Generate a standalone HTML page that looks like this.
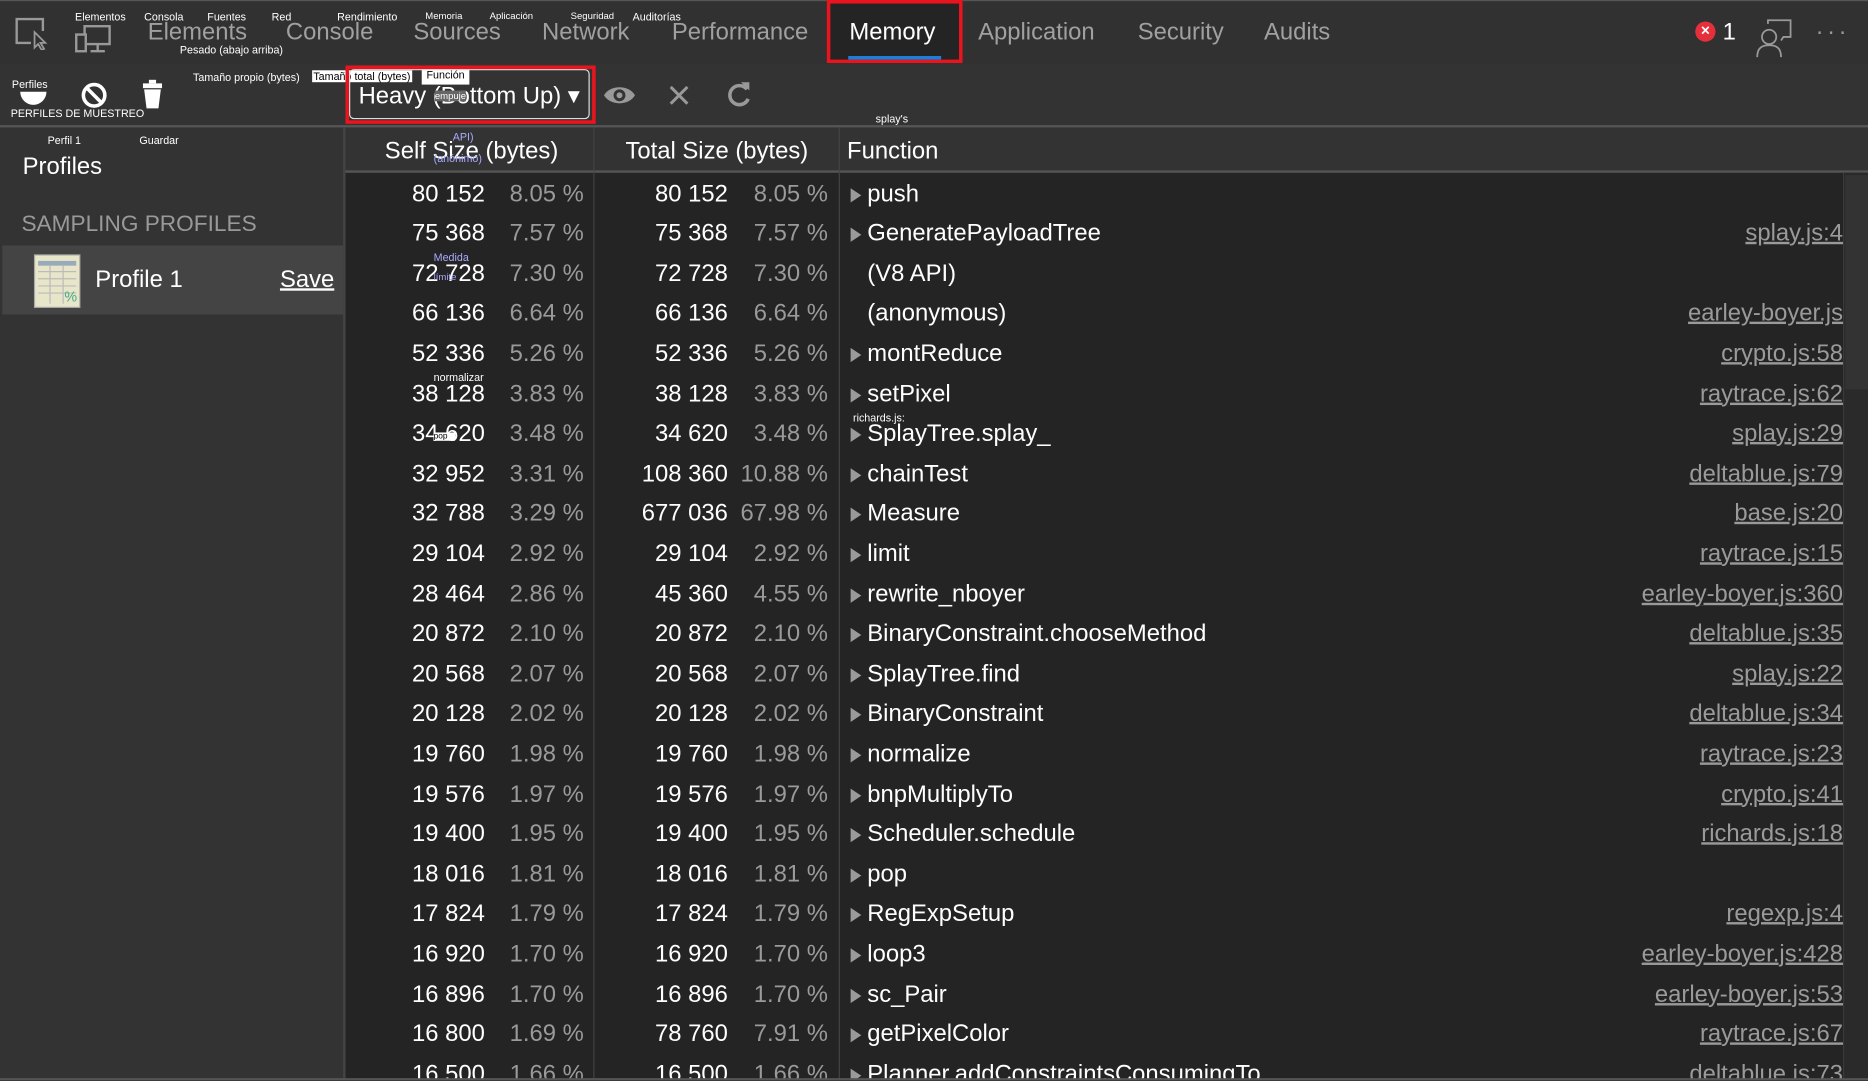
<!DOCTYPE html>
<html><head><meta charset="utf-8">
<style>
html,body{margin:0;padding:0;width:1868px;height:1080px;overflow:hidden;background:#242424;}
#w{position:absolute;left:0;top:0;width:1568px;height:907px;transform:scale(1.19133);transform-origin:0 0;font-family:"Liberation Sans",sans-serif;color:#fff;background:#242424;overflow:hidden;}
.a{position:absolute;}
.tiny{position:absolute;font-size:9px;color:#fff;white-space:nowrap;}
.tab{position:absolute;top:16px;font-size:20px;color:#a0a0a0;}
.row{position:absolute;left:290px;width:1257px;height:33.6px;font-size:20px;line-height:33.6px;}
.n{position:absolute;text-align:right;color:#fff;}
.p{position:absolute;text-align:right;color:#9a9a9a;}
.f{position:absolute;left:438px;color:#fff;white-space:nowrap;}
.tri{position:absolute;left:424px;top:11px;width:0;height:0;border-left:9px solid #9a9a9a;border-top:6px solid transparent;border-bottom:6px solid transparent;}
.l{position:absolute;right:0;color:#9a9a9a;text-decoration:underline;white-space:nowrap;}
</style></head><body><div id="w">
<div class="a" style="left:0;top:0;width:1568px;height:53px;background:#313131;border-top:1px solid #555;box-sizing:border-box"></div>
<svg class="a" style="left:12px;top:14px" width="30" height="28" viewBox="0 0 30 28"><path d="M14 22H2V2h22v10" fill="none" stroke="#999" stroke-width="2"/><path d="M17 13l0 13 3-3 3 5 2-1-3-5 4 0z" fill="none" stroke="#999" stroke-width="1.5"/></svg>
<svg class="a" style="left:62px;top:20px" width="32" height="26" viewBox="0 0 32 26"><rect x="9" y="2" width="21" height="15" fill="none" stroke="#999" stroke-width="2"/><rect x="2" y="9" width="8" height="14" fill="#313131" stroke="#999" stroke-width="2"/><path d="M14 23h12M20 17v6" stroke="#999" stroke-width="2"/></svg>
<div class="tab" style="left:124px">Elements</div>
<div class="tab" style="left:240px">Console</div>
<div class="tab" style="left:347px">Sources</div>
<div class="tab" style="left:455px">Network</div>
<div class="tab" style="left:564px">Performance</div>
<div class="a" style="left:694px;top:0;width:114px;height:53px;border:3px solid #e8141e;box-sizing:border-box;background:#242424"></div>
<div class="tab" style="left:713px;color:#fff">Memory</div>
<div class="a" style="left:712px;top:47px;width:78px;height:3px;background:#1a7fd8"></div>
<div class="tab" style="left:821px">Application</div>
<div class="tab" style="left:955px">Security</div>
<div class="tab" style="left:1061px">Audits</div>
<div class="a" style="left:1423px;top:18px;width:17px;height:17px;border-radius:50%;background:#e5303c;color:#fff;font-size:13px;line-height:16px;text-align:center;font-weight:bold">×</div>
<div class="a" style="left:1446px;top:16px;font-size:20px;color:#fff">1</div>
<svg class="a" style="left:1473px;top:14px" width="32" height="36" viewBox="0 0 32 36"><path d="M11 6V3h19v14h-6l-2 3" fill="none" stroke="#999" stroke-width="1.5"/><circle cx="12" cy="17" r="6" fill="none" stroke="#999" stroke-width="1.5"/><path d="M2 34c0-8 4-10 10-10s10 2 10 10" fill="none" stroke="#999" stroke-width="1.5"/></svg>
<div class="a" style="left:1524px;top:16px;font-size:20px;color:#999;letter-spacing:3px">···</div>
<div class="tiny" style="left:63px;top:9px">Elementos</div><div class="tiny" style="left:121px;top:9px">Consola</div><div class="tiny" style="left:174px;top:9px">Fuentes</div><div class="tiny" style="left:228px;top:9px">Red</div><div class="tiny" style="left:283px;top:9px">Rendimiento</div><div class="tiny" style="left:357px;top:9px;font-size:8px">Memoria</div><div class="tiny" style="left:411px;top:9px;font-size:8px">Aplicación</div><div class="tiny" style="left:479px;top:9px;font-size:8px">Seguridad</div><div class="tiny" style="left:531px;top:9px">Auditorías</div>
<div class="tiny" style="left:151px;top:37px">Pesado (abajo arriba)</div>
<div class="a" style="left:0;top:53px;width:1568px;height:54px;background:#333;border-bottom:2px solid #555;box-sizing:border-box"></div>
<div class="tiny" style="left:10px;top:66px">Perfiles</div>
<div class="a" style="left:17px;top:77px;width:22px;height:11px;background:#fff;border-radius:0 0 11px 11px"></div>
<div class="tiny" style="left:9px;top:90px">PERFILES DE MUESTREO</div>
<svg class="a" style="left:67px;top:68px" width="24" height="24" viewBox="0 0 24 24"><circle cx="12" cy="12" r="9" fill="none" stroke="#fff" stroke-width="3"/><path d="M6 6l12 12" stroke="#fff" stroke-width="3"/></svg>
<svg class="a" style="left:119px;top:66px" width="18" height="26" viewBox="0 0 18 26"><rect x="6" y="1" width="6" height="3" fill="#fff"/><rect x="1" y="4" width="16" height="4" fill="#fff"/><path d="M2 9h14l-2 16H4z" fill="#fff"/></svg>
<div class="tiny" style="left:162px;top:60px">Tamaño propio (bytes)</div>
<div class="tiny" style="left:262px;top:59px;background:#fff;color:#000;padding:0 1px">Tamaño total (bytes)</div>
<div class="tiny" style="left:354px;top:58px;background:#fff;color:#000;padding:0 4px;height:13px">Función</div>
<div class="a" style="left:290px;top:55px;width:210px;height:49px;border:3px solid #e8141e;box-sizing:border-box"></div>
<div class="a" style="left:293px;top:58px;width:202px;height:42px;border:1px solid #ddd;border-radius:4px;box-sizing:border-box"></div>
<div class="a" style="left:301px;top:68px;font-size:20px;color:#fff">Heavy (Bottom Up) ▾</div>
<div class="tiny" style="left:365px;top:76px;background:#666;font-size:8px">empuje</div>
<svg class="a" style="left:505px;top:68px" width="30" height="24" viewBox="0 0 30 24"><path d="M2 12C7 3 23 3 28 12C23 21 7 21 2 12z" fill="#999"/><circle cx="15" cy="12" r="5" fill="#333"/><circle cx="15" cy="12" r="2.5" fill="#999"/></svg>
<svg class="a" style="left:560px;top:70px" width="20" height="20" viewBox="0 0 20 20"><path d="M3 3l14 14M17 3L3 17" stroke="#999" stroke-width="2.5"/></svg>
<svg class="a" style="left:608px;top:67px" width="24" height="26" viewBox="0 0 24 26"><path d="M19 8A8 8 0 1 0 20 16" fill="none" stroke="#999" stroke-width="3"/><path d="M14 2l7 0 0 7z" fill="#999"/></svg>
<div class="tiny" style="left:735px;top:95px">splay's</div>
<div class="a" style="left:0;top:107px;width:290px;height:800px;background:#333;border-right:2px solid #444;box-sizing:border-box"></div>
<div class="tiny" style="left:40px;top:113px">Perfil 1</div><div class="tiny" style="left:117px;top:113px">Guardar</div>
<div class="a" style="left:19px;top:129px;font-size:20px;color:#fff">Profiles</div>
<div class="a" style="left:18px;top:178px;font-size:19px;color:#999">SAMPLING PROFILES</div>
<div class="a" style="left:2px;top:206px;width:286px;height:58px;background:#444"></div>
<svg class="a" style="left:28px;top:213px" width="40" height="46" viewBox="0 0 40 46"><rect x="1" y="1" width="38" height="44" fill="#e8e6c8" stroke="#aaa"/><rect x="4" y="6" width="32" height="4" fill="#9ab"/><path d="M4 15h32M4 21h32M4 27h32M4 33h32M14 10v32M25 10v32" stroke="#bbb"/><text x="26" y="40" font-size="12" fill="#4a8" font-family="Liberation Sans">%</text></svg>
<div class="a" style="left:80px;top:224px;font-size:20px;color:#fff">Profile 1</div>
<div class="a" style="left:235px;top:224px;font-size:20px;color:#fff;text-decoration:underline">Save</div>
<div class="a" style="left:290px;top:107px;width:1278px;height:38px;background:#333;border-bottom:2px solid #555;box-sizing:border-box"></div>
<div class="a" style="left:323px;top:116px;font-size:20px">Self Size (bytes)</div>
<div class="a" style="left:525px;top:116px;font-size:20px">Total Size (bytes)</div>
<div class="a" style="left:711px;top:116px;font-size:20px">Function</div>
<div class="tiny" style="left:380px;top:110px;color:#aaf">API)</div><div class="tiny" style="left:364px;top:128px;color:#aaf">(anónimo)</div>
<div class="a" style="left:498px;top:107px;width:1px;height:800px;background:#444"></div>
<div class="a" style="left:704px;top:107px;width:1px;height:800px;background:#444"></div>
<div class="a" style="left:1547px;top:145px;width:21px;height:762px;background:#2a2a2a;border-left:1px solid #3a3a3a"></div>
<div class="a" style="left:1549px;top:147px;width:19px;height:180px;background:#333"></div>
<div id="rows"></div>
<div class="tiny" style="left:364px;top:211px;color:#aaf">Medida</div><div class="tiny" style="left:364px;top:228px;color:#aaf;font-size:8px">límite</div>
<div class="tiny" style="left:364px;top:312px">normalizar</div>
<div class="tiny" style="left:364px;top:363px;background:#fff;color:#000;width:18px;font-size:7px">pop</div>
<div class="tiny" style="left:716px;top:346px">richards.js:</div>
<div class="a" style="left:0;top:905px;width:1568px;height:2px;background:#555"></div>
</div>
<script>
var d=[["80 152","8.05 %","80 152","8.05 %","push","",1],
["75 368","7.57 %","75 368","7.57 %","GeneratePayloadTree","splay.js:4",1],
["72 728","7.30 %","72 728","7.30 %","(V8 API)","",0],
["66 136","6.64 %","66 136","6.64 %","(anonymous)","earley-boyer.js",0],
["52 336","5.26 %","52 336","5.26 %","montReduce","crypto.js:58",1],
["38 128","3.83 %","38 128","3.83 %","setPixel","raytrace.js:62",1],
["34 620","3.48 %","34 620","3.48 %","SplayTree.splay_","splay.js:29",1],
["32 952","3.31 %","108 360","10.88 %","chainTest","deltablue.js:79",1],
["32 788","3.29 %","677 036","67.98 %","Measure","base.js:20",1],
["29 104","2.92 %","29 104","2.92 %","limit","raytrace.js:15",1],
["28 464","2.86 %","45 360","4.55 %","rewrite_nboyer","earley-boyer.js:360",1],
["20 872","2.10 %","20 872","2.10 %","BinaryConstraint.chooseMethod","deltablue.js:35",1],
["20 568","2.07 %","20 568","2.07 %","SplayTree.find","splay.js:22",1],
["20 128","2.02 %","20 128","2.02 %","BinaryConstraint","deltablue.js:34",1],
["19 760","1.98 %","19 760","1.98 %","normalize","raytrace.js:23",1],
["19 576","1.97 %","19 576","1.97 %","bnpMultiplyTo","crypto.js:41",1],
["19 400","1.95 %","19 400","1.95 %","Scheduler.schedule","richards.js:18",1],
["18 016","1.81 %","18 016","1.81 %","pop","",1],
["17 824","1.79 %","17 824","1.79 %","RegExpSetup","regexp.js:4",1],
["16 920","1.70 %","16 920","1.70 %","loop3","earley-boyer.js:428",1],
["16 896","1.70 %","16 896","1.70 %","sc_Pair","earley-boyer.js:53",1],
["16 800","1.69 %","78 760","7.91 %","getPixelColor","raytrace.js:67",1],
["16 500","1.66 %","16 500","1.66 %","Planner.addConstraintsConsumingTo","deltablue.js:73",1]];
var h="";
d.forEach(function(r,i){
h+='<div class="row" style="top:'+(146.5+i*33.6)+'px"><span class="n" style="right:1140px">'+r[0]+'</span><span class="p" style="right:1057px">'+r[1]+'</span><span class="n" style="right:936px">'+r[2]+'</span><span class="p" style="right:852px">'+r[3]+'</span>'+(r[6]?'<span class="tri"></span>':'')+'<span class="f">'+r[4]+'</span><span class="l">'+r[5]+'</span></div>';
});
document.getElementById("rows").innerHTML=h;
</script>
</body></html>
